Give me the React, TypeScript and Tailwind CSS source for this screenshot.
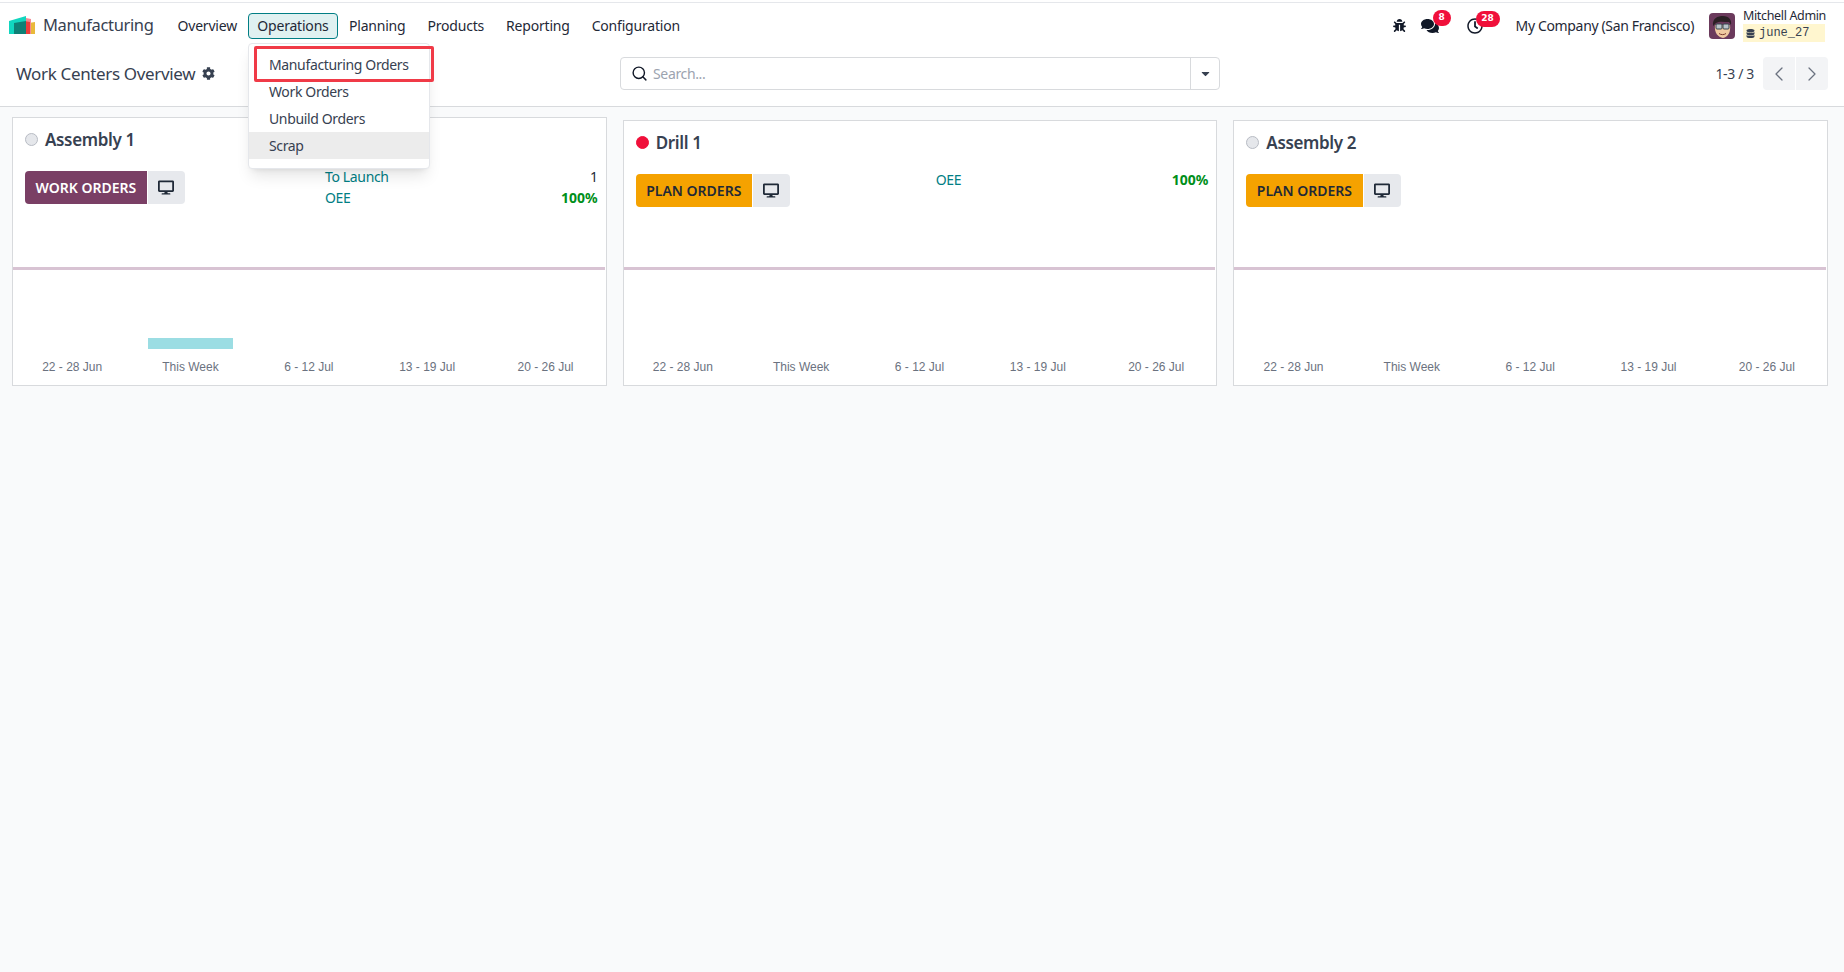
import { FaBug, FaCaretDown, FaCog, FaComments, FaDatabase, FaDesktop, FaRegClock } from 'react-icons/fa';
import { ChevronLeft, ChevronRight, Search } from 'lucide-react';

const navItems = ['Overview', 'Operations', 'Planning', 'Products', 'Reporting', 'Configuration'];
const weeks = ['22 - 28 Jun', 'This Week', '6 - 12 Jul', '13 - 19 Jul', '20 - 26 Jul'];

function Logo() {
  return (
    <svg width="27" height="19" viewBox="0 0 27 19" className="shrink-0">
      <path d="M20 7 L26 6 L26 18 L20 18 Z" fill="#e9b93a" />
      <path d="M17 2 L22 3 L22 18 L17 18 Z" fill="#f58a93" />
      <path d="M15 5 L21 6 L21 18 L15 18 Z" fill="#ee3c3c" />
      <path d="M0 5 L17 0 L17 18 L0 18 Z" fill="#12d6bf" />
      <path d="M5 7 L17 5 L17 18 L5 18 Z" fill="#0f8076" />
    </svg>
  );
}

function Avatar() {
  return (
    <svg width="26" height="26" viewBox="0 0 26 26" className="shrink-0 rounded-[4px]">
      <rect width="26" height="26" fill="#6b3a5c" />
      <path d="M6 12 C5 20 9 24 14 25 C19 24 22 19 21 12 Z" fill="#f0c9a0" />
      <path d="M4 13 C3 5 9 3 14 3 C20 3 23 7 22 12 L20 9 C15 9 10 8 7 10 Z" fill="#2a2024" />
      <rect x="7" y="11" width="6" height="5" rx="1" fill="#b9c4c9" stroke="#37474f" />
      <rect x="14" y="11" width="6" height="5" rx="1" fill="#b9c4c9" stroke="#37474f" />
      <path d="M10 20.5 C12 22 15 22 17 20.5" stroke="#7a3b2e" fill="none" />
    </svg>
  );
}

function Badge({ text, className }: { text: string; className: string }) {
  return (
    <span className={`absolute top-[-7px] flex h-[16px] items-center justify-center rounded-full bg-[#f0103a] text-[9px] font-bold tracking-normal text-white font-['DejaVu_Sans'] ${className}`}>
      {text}
    </span>
  );
}

function Navbar() {
  return (
    <div className="flex h-[45px] items-center bg-white text-[14px] text-[#1f2937]">
      <div className="ml-[9px] flex items-center">
        <Logo />
        <span className="ml-[7px] text-[16.5px] text-[#374151]">Manufacturing</span>
      </div>
      <nav className="ml-[13px] flex items-center tracking-[-0.2px]">
        {navItems.map(item =>
          item === 'Operations' ? (
            <div key={item} className="relative">
              <button className="flex h-[26px] w-[90px] items-center justify-center rounded-[4px] border border-[#017e84] bg-[#e0f1f1]">
                {item}
              </button>
              <div className="absolute left-0 top-[30px] z-10 h-[126px] w-[182px] rounded-[4px] border border-[#e5e7eb] bg-white pt-[7px] tracking-[-0.35px] text-[#374151] shadow-lg">
                <div className="flex h-[27px] items-center pl-[20px]">Manufacturing Orders</div>
                <div className="flex h-[27px] items-center pl-[20px]">Work Orders</div>
                <div className="flex h-[27px] items-center pl-[20px]">Unbuild Orders</div>
                <div className="flex h-[27px] items-center bg-[#ececec] pl-[20px]">Scrap</div>
                <div className="absolute left-[5px] top-[2px] h-[36px] w-[180px] rounded-[2px] border-[3px] border-[#f03a47]" />
              </div>
            </div>
          ) : (
            <a key={item} className="flex h-[26px] items-center px-[11px]">
              {item}
            </a>
          ),
        )}
      </nav>
      <div className="ml-auto flex items-center">
        <FaBug className="h-[13px] w-[13px] text-[#111827]" />
        <div className="relative ml-[15px]">
          <FaComments className="h-[18px] w-[18px] text-[#111827]" />
          <Badge text="8" className="left-[12px] w-[18px]" />
        </div>
        <div className="relative ml-[28px]">
          <FaRegClock className="h-[16px] w-[16px] text-[#111827]" />
          <Badge text="28" className="left-[9px] w-[24px]" />
        </div>
        <span className="ml-[33px]">My Company (San Francisco)</span>
        <div className="ml-[15px] mr-[19px] flex items-center">
          <Avatar />
          <div className="ml-[8px] flex w-[82px] flex-col">
            <span className="h-[14px] whitespace-nowrap text-[12.5px] leading-[14px]">Mitchell Admin</span>
            <span className="mt-[1px] flex h-[18px] items-center bg-[#fff6cf] pl-[3px] text-[12px] tracking-normal font-['Liberation_Mono'] text-[#374151]">
              <FaDatabase className="h-[9px] w-[9px]" />
              <span className="ml-[4px]">june_27</span>
            </span>
          </div>
        </div>
      </div>
    </div>
  );
}

function ControlPanel() {
  return (
    <div className="flex h-[59px] items-start border-b border-[#d8dadd] bg-white pl-[16px] pr-[16px] pt-[9px]">
      <div className="flex h-[33px] w-[604px] items-center">
        <span className="text-[17px] text-[#374151]">Work Centers Overview</span>
        <FaCog className="ml-[7px] h-[13px] w-[13px] text-[#374151]" />
      </div>
      <div className="flex h-[33px] w-[600px] items-center rounded-[4px] border border-[#d8dadd]">
        <Search className="ml-[10px] h-[17px] w-[17px] text-[#111827]" strokeWidth={2} />
        <span className="ml-[5px] flex-1 text-[14px] text-[#9ca3af]">Search...</span>
        <div className="flex h-full w-[29px] items-center justify-center border-l border-[#d8dadd]">
          <FaCaretDown className="h-[13px] w-[13px] text-[#374151]" />
        </div>
      </div>
      <div className="ml-auto flex h-[33px] items-center">
        <span className="text-[14px] text-[#374151]">1-3 / 3</span>
        <div className="ml-[9px] flex h-[33px] gap-px">
          <div className="flex w-[32px] items-center justify-center rounded-l-[4px] bg-[#f3f4f6]">
            <ChevronLeft className="h-[24px] w-[24px] text-[#6b7280]" strokeWidth={1.25} />
          </div>
          <div className="flex w-[32px] items-center justify-center rounded-r-[4px] bg-[#f3f4f6]">
            <ChevronRight className="h-[24px] w-[24px] text-[#6b7280]" strokeWidth={1.25} />
          </div>
        </div>
      </div>
    </div>
  );
}

interface CardProps {
  name: string;
  action: string;
  purple?: boolean;
  red?: boolean;
  toLaunch?: boolean;
  bar?: boolean;
  hasOee?: boolean;
  heightClass: string;
}

function WorkCenterCard({ name, action, purple, red, toLaunch, bar, hasOee, heightClass }: CardProps) {
  return (
    <div className={`flex flex-col border border-[#d8dadd] bg-white ${heightClass}`}>
      <div className="flex h-[43px] items-center pl-[12px]">
        <span className={`h-[13px] w-[13px] rounded-full border ${red ? 'border-[#f0103a] bg-[#f0103a]' : 'border-[#b8bcc4] bg-[#e5e7eb]'}`} />
        <span className="ml-[7px] text-[17px] font-semibold text-[#374151]">{name}</span>
      </div>
      <div className="mt-[10px] grid grid-cols-[300px_1fr] pl-[12px] pr-[8px]">
        <div className="flex">
          <button className={`flex h-[33px] items-center rounded-l-[4px] px-[10.5px] text-[14px] font-semibold tracking-normal ${purple ? 'bg-[#7a3f65] text-white' : 'bg-[#f5a200] text-[#1f2937]'}`}>
            {action}
          </button>
          <button className="ml-[1px] flex h-[33px] w-[37px] items-center justify-center rounded-r-[4px] bg-[#e7e9ed]">
            <FaDesktop className="h-[15px] w-[16px] text-[#1f2937]" />
          </button>
        </div>
        {hasOee && (
          <div className="text-[14px] text-[#017e84]">
            {toLaunch && (
              <div className="flex h-[21px] items-center justify-between -mt-[5px]">
                <span>To Launch</span>
                <span className="text-[#1f2937]">1</span>
              </div>
            )}
            <div className={`flex h-[21px] items-center justify-between ${toLaunch ? '' : '-mt-[5px]'}`}>
              <span>OEE</span>
              <span className="font-bold tracking-normal text-[#008f1a]">100%</span>
            </div>
          </div>
        )}
      </div>
      <div className="mt-auto">
        <div className="mr-[1px] h-[3px] bg-[#d8c3d3]" />
        <div className="mr-[1px] grid h-[79px] grid-cols-5 items-end">
          {weeks.map((week, i) => (
            <div key={week} className="flex justify-center">
              {bar && i === 1 && <div className="h-[11px] w-[85px] bg-[#9bdde3]" />}
            </div>
          ))}
        </div>
        <div className="mr-[1px] grid h-[36px] grid-cols-5 items-center">
          {weeks.map(week => (
            <span key={week} className="text-center text-[12px] tracking-normal font-['Liberation_Sans'] text-[#6b7280]">
              {week}
            </span>
          ))}
        </div>
      </div>
    </div>
  );
}

export default function App() {
  return (
    <div className="h-[972px] w-full overflow-hidden bg-[#f9fafb] tracking-[-0.35px] font-['Noto_Sans',sans-serif]">
      <div className="h-[3px] border-b border-[#e5e7eb] bg-white" />
      <Navbar />
      <ControlPanel />
      <div className="grid grid-cols-3 items-end gap-[16px] pl-[12px] pr-[16px] pt-[10px]">
        <WorkCenterCard name="Assembly 1" action="WORK ORDERS" purple toLaunch bar hasOee heightClass="h-[269px]" />
        <WorkCenterCard name="Drill 1" action="PLAN ORDERS" red hasOee heightClass="h-[266px]" />
        <WorkCenterCard name="Assembly 2" action="PLAN ORDERS" heightClass="h-[266px]" />
      </div>
    </div>
  );
}
